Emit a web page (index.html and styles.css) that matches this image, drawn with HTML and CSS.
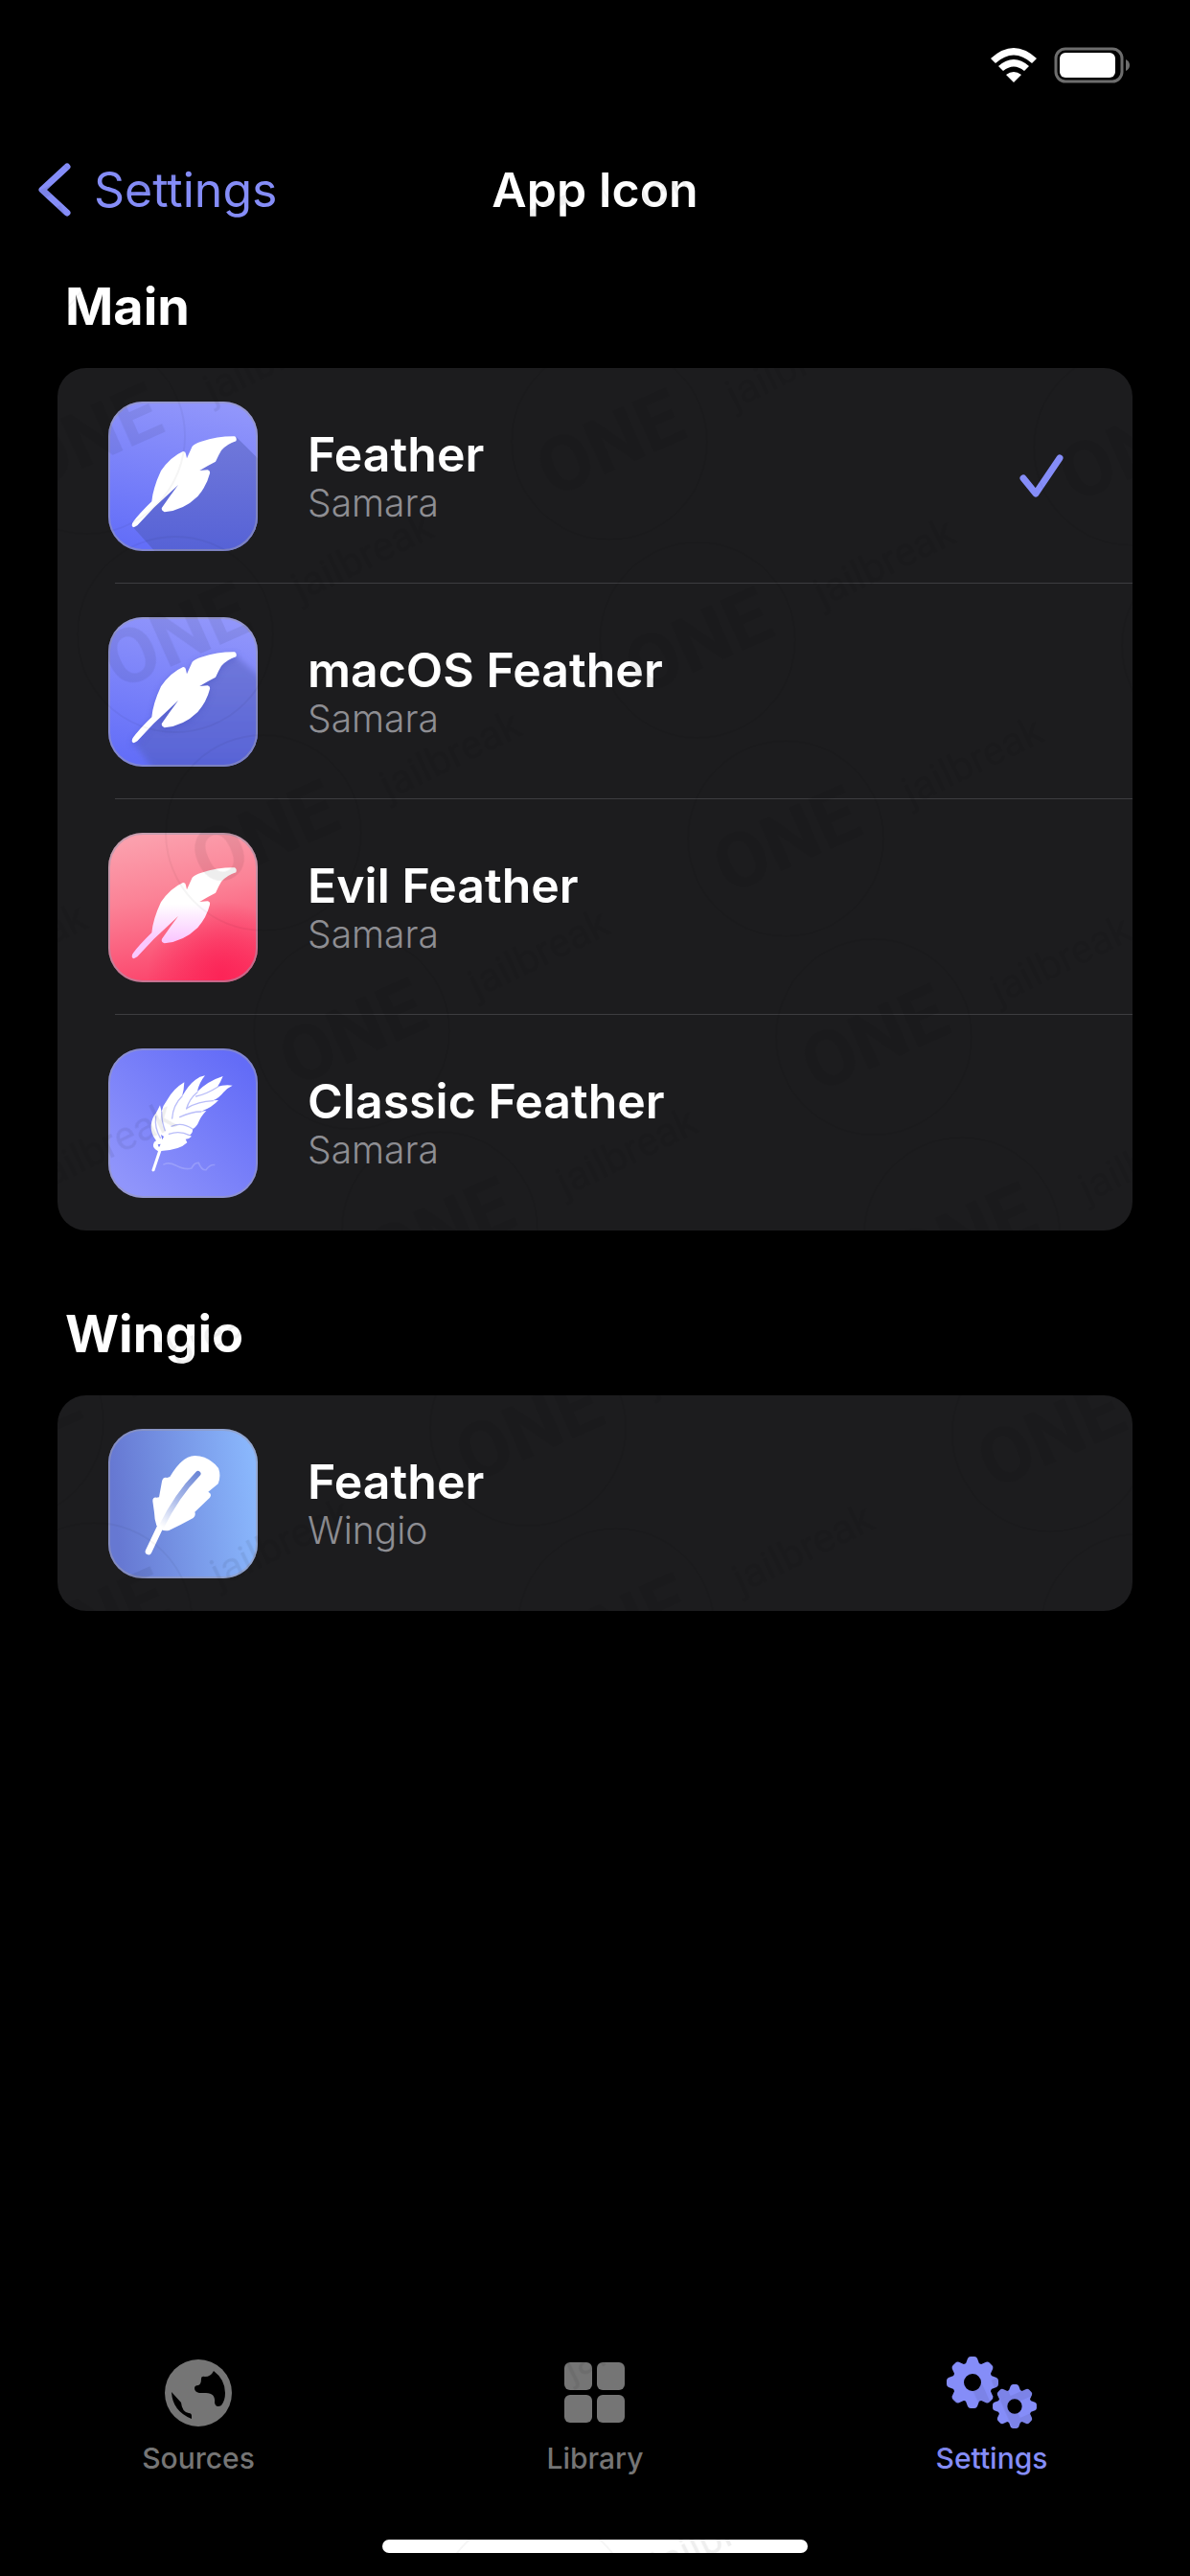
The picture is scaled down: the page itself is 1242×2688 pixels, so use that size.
FILE: index.html
```html
<!DOCTYPE html>
<html lang="en">
<head>
    <meta charset="UTF-8">
    <meta name="viewport" content="width=device-width, initial-scale=1.0">
    <title>App Icon</title>
    <link rel="stylesheet" href="styles.css">
</head>
<body>
    <!-- Shared shapes -->
    <svg class="defs" width="0" height="0" aria-hidden="true">
        <defs>
            <linearGradient id="indigo" x1="0.6" y1="0" x2="0.4" y2="1">
                <stop offset="0" stop-color="#9196fb"/>
                <stop offset="1" stop-color="#636ef8"/>
            </linearGradient>
            <linearGradient id="shade" x1="0" y1="0" x2="0" y2="1">
                <stop offset="0" stop-color="#7078da"/>
                <stop offset="1" stop-color="#5662d6"/>
            </linearGradient>
            <linearGradient id="rose" x1="0.4" y1="0" x2="0.6" y2="1">
                <stop offset="0" stop-color="#fba0ad"/>
                <stop offset="0.4" stop-color="#fb8296"/>
                <stop offset="1" stop-color="#fb3f68"/>
            </linearGradient>
            <radialGradient id="rose-glow" cx="0.76" cy="0.96" r="0.5">
                <stop offset="0" stop-color="#fc2457"/>
                <stop offset="1" stop-color="#fc2457" stop-opacity="0"/>
            </radialGradient>
            <linearGradient id="rose-feather" x1="0" y1="0" x2="0" y2="1">
                <stop offset="0.4" stop-color="#fff"/>
                <stop offset="0.8" stop-color="#fac8ff"/>
            </linearGradient>
            <linearGradient id="classic" x1="1" y1="0" x2="0" y2="1">
                <stop offset="0.1" stop-color="#636cf7"/>
                <stop offset="0.9" stop-color="#9095fb"/>
            </linearGradient>
            <linearGradient id="sky" x1="0" y1="0.1" x2="1" y2="0">
                <stop offset="0" stop-color="#6678d2"/>
                <stop offset="1" stop-color="#8cbbff"/>
            </linearGradient>
            <linearGradient id="quill" gradientUnits="userSpaceOnUse" x1="281" y1="139" x2="166" y2="307">
                <stop offset="0" stop-color="#6d87d6"/>
                <stop offset="0.5" stop-color="#a9b9e9"/>
                <stop offset="1" stop-color="#fff"/>
            </linearGradient>
            <filter id="blur" x="-20%" y="-20%" width="140%" height="140%">
                <feGaussianBlur stdDeviation="9"/>
            </filter>
            <clipPath id="tile">
                <rect width="468" height="468" rx="108"/>
            </clipPath>
            <path id="feather" d="M74 388 Q74 380 79 375 Q98 350 136 313 Q140 270 165 217 Q195 173 234 156 Q242 155 243 164 L246 178 L263 140 Q272 131 291 125 Q345 108 396 109 Q404 114 400 124 Q372 133 354 153 Q345 168 336 188 Q312 200 286 216 L311 214 Q320 216 318 225 Q308 265 280 297 Q235 341 176 346 Q164 341 168 332 Q190 300 219 261 Q180 298 143 332 L91 388 Q76 399 74 388 Z"/>
            <path id="tooth" d="M-8 -17 L-5 -25 Q-4 -27 -2 -27 H2 Q4 -27 5 -25 L8 -17 Z"/>
            <g id="gear">
                <circle r="15" fill="none" stroke="currentColor" stroke-width="12"/>
                <use href="#tooth"/>
                <use href="#tooth" transform="rotate(45)"/>
                <use href="#tooth" transform="rotate(90)"/>
                <use href="#tooth" transform="rotate(135)"/>
                <use href="#tooth" transform="rotate(180)"/>
                <use href="#tooth" transform="rotate(225)"/>
                <use href="#tooth" transform="rotate(270)"/>
                <use href="#tooth" transform="rotate(315)"/>
            </g>
        </defs>
    </svg>

    <div class="status-bar">
        <svg class="wifi" viewBox="0 0 48 36" fill="#fff" role="img" aria-label="Wi-Fi">
            <path d="M0 11 Q24 -11 48 11 L43 16 Q24 -1 5 16 Z"/>
            <path d="M8 19 Q24 5 40 19 L35 24 Q24 15 13 24 Z"/>
            <path d="M16 28 Q24 22 32 28 L24 36 Z"/>
        </svg>
        <svg class="battery" viewBox="0 0 80 38" role="img" aria-label="Battery full">
            <rect x="2" y="2" width="69" height="34" rx="10" fill="none" stroke="#6d6d6d" stroke-width="3"/>
            <rect x="6" y="6" width="58" height="26" rx="6" fill="#fff"/>
            <path d="M75 13 Q79 15 79 19 Q79 23 75 25 Z" fill="#6d6d6d"/>
        </svg>
    </div>

    <header class="nav-bar">
        <a class="back" href="#settings">
            <svg class="chevron" viewBox="0 0 34 56" aria-hidden="true">
                <path d="M30 4 L4 28 L30 52" fill="none" stroke="currentColor" stroke-width="7" stroke-linecap="round" stroke-linejoin="round"/>
            </svg>
            <span>Settings</span>
        </a>
        <h1>App Icon</h1>
    </header>

    <main>
        <section>
            <h2>Main</h2>
            <ul class="card">
                <li>
                    <button class="row" type="button" aria-pressed="true">
                        <svg class="app-icon" viewBox="0 0 468 468" aria-hidden="true">
                            <g clip-path="url(#tile)">
                                <rect width="468" height="468" fill="url(#indigo)"/>
                                <path d="M400 110 L468 178 V468 H145 L78 394 L246 178 Z" fill="url(#shade)"/>
                                <use href="#feather" fill="#fff"/>
                            </g>
                            <rect class="edge" x="3" y="3" width="462" height="462" rx="105"/>
                        </svg>
                        <span class="label">
                            <span class="name">Feather</span>
                            <span class="author">Samara</span>
                        </span>
                        <svg class="check" viewBox="0 0 46 46" aria-hidden="true">
                            <path d="M4 25 L17 41 L42 4" fill="none" stroke="currentColor" stroke-width="7" stroke-linecap="round" stroke-linejoin="round"/>
                        </svg>
                    </button>
                </li>
                <li>
                    <button class="row" type="button" aria-pressed="false">
                        <svg class="app-icon" viewBox="0 0 468 468" aria-hidden="true">
                            <g clip-path="url(#tile)">
                                <rect width="468" height="468" fill="url(#indigo)"/>
                                <path d="M395 118 L490 200 V490 H150 L84 398 L246 190 Z" fill="url(#shade)" filter="url(#blur)"/>
                                <use href="#feather" fill="#4c56c4" opacity="0.5" filter="url(#blur)" y="7"/>
                                <use href="#feather" fill="#fff"/>
                            </g>
                            <rect class="edge" x="3" y="3" width="462" height="462" rx="105"/>
                        </svg>
                        <span class="label">
                            <span class="name">macOS Feather</span>
                            <span class="author">Samara</span>
                        </span>
                    </button>
                </li>
                <li>
                    <button class="row" type="button" aria-pressed="false">
                        <svg class="app-icon" viewBox="0 0 468 468" aria-hidden="true">
                            <g clip-path="url(#tile)">
                                <rect width="468" height="468" fill="url(#rose)"/>
                                <rect width="468" height="468" fill="url(#rose-glow)"/>
                                <use href="#feather" fill="url(#rose-feather)"/>
                            </g>
                            <rect class="edge" x="3" y="3" width="462" height="462" rx="105"/>
                        </svg>
                        <span class="label">
                            <span class="name">Evil Feather</span>
                            <span class="author">Samara</span>
                        </span>
                    </button>
                </li>
                <li>
                    <button class="row" type="button" aria-pressed="false">
                        <svg class="app-icon" viewBox="0 0 468 468" aria-hidden="true">
                            <g clip-path="url(#tile)">
                                <rect width="468" height="468" fill="url(#classic)"/>
                                <path d="M136 382 L156 322 Q138 312 141 301 Q142 292 150 289 Q132 266 134 240 Q137 216 149 203 Q155 193 162 178 L167 198 Q171 178 184 162 Q204 126 238 106 Q237 132 231 150 Q252 113 273 98 Q286 87 303 85 Q284 108 279 135 Q312 102 359 87 Q352 105 342 120 Q362 113 389 116 Q372 124 361 137 Q348 154 328 163 L345 162 Q326 184 291 197 L307 195 Q290 213 284 228 Q278 244 264 253 Q266 264 254 272 L261 275 Q254 283 242 284 L247 295 Q224 318 166 321 L145 383 Q139 388 136 382 Z" fill="#fff"/>
                                <g fill="none" stroke="#b9bdf9" stroke-width="4" stroke-linecap="round">
                                    <path d="M344 120 Q306 144 275 150"/>
                                    <path d="M279 137 Q253 158 245 189"/>
                                    <path d="M231 150 Q203 177 200 219"/>
                                    <path d="M167 198 Q167 230 178 257"/>
                                    <path d="M328 164 Q282 166 246 187"/>
                                    <path d="M291 198 Q259 198 224 215"/>
                                    <path d="M264 252 Q230 229 198 244"/>
                                    <path d="M254 272 Q224 256 190 268"/>
                                    <path d="M149 213 Q144 248 163 280"/>
                                </g>
                                <path d="M165 270 L174 276 L169 286 Z M155 301 L164 299 L159 310 Z" fill="#747cf8"/>
                                <path d="M172 364 Q188 354 211 366 Q238 381 261 375 Q269 357 283 358 Q292 382 306 380 Q320 362 334 365" fill="none" stroke="#fff" stroke-width="5" opacity="0.18"/>
                            </g>
                            <rect class="edge" x="3" y="3" width="462" height="462" rx="105"/>
                        </svg>
                        <span class="label">
                            <span class="name">Classic Feather</span>
                            <span class="author">Samara</span>
                        </span>
                    </button>
                </li>
            </ul>
        </section>

        <section>
            <h2>Wingio</h2>
            <ul class="card">
                <li>
                    <button class="row" type="button" aria-pressed="false">
                        <svg class="app-icon" viewBox="0 0 468 468" aria-hidden="true">
                            <g clip-path="url(#tile)">
                                <rect width="468" height="468" fill="url(#sky)"/>
                                <path d="M126 384 L162 308" stroke="#fff" stroke-width="20" stroke-linecap="round"/>
                                <path d="M151 302 Q144 280 144 262 L139 226 Q139 213 151 215 L159 214 L168 164 Q171 150 184 153 L193 150 Q232 84 271 84 Q315 85 345 123 Q354 147 344 172 L313 197 Q326 204 318 215 L271 260 Q275 272 266 279 Q228 300 190 318 Q167 323 151 302 Z" fill="#fff"/>
                                <path d="M281 140 Q214 208 166 307" fill="none" stroke="url(#quill)" stroke-width="17" stroke-linecap="round"/>
                            </g>
                            <rect class="edge" x="3" y="3" width="462" height="462" rx="105"/>
                        </svg>
                        <span class="label">
                            <span class="name">Feather</span>
                            <span class="author">Wingio</span>
                        </span>
                    </button>
                </li>
            </ul>
        </section>
    </main>

    <nav class="tab-bar">
        <a class="tab" href="#sources">
            <svg width="70" height="78" viewBox="0 -4 70 78" aria-hidden="true">
                <circle cx="35" cy="35" r="35" fill="currentColor"/>
                <path d="M51 12 Q63 21 63 35 Q63 43 59 48 Q53 51 52 45 Q53 35 43 35 H36 Q31 34 31 30 Q31 27 35 27 Q38 26 38 20 Q38 17 42 18 Q48 18 51 12 Z" fill="#000"/>
                <path d="M7 34 L17 45 Q18 55 25 56 Q28 56 28 59 V62 Q8 54 7 34 Z" fill="#000"/>
            </svg>
            <span>Sources</span>
        </a>
        <a class="tab" href="#library">
            <svg width="64" height="78" viewBox="0 -7 64 78" fill="currentColor" aria-hidden="true">
                <rect width="29" height="29" rx="6"/>
                <rect x="34" width="29" height="29" rx="6"/>
                <rect y="34" width="29" height="29" rx="6"/>
                <rect x="34" y="34" width="29" height="29" rx="6"/>
            </svg>
            <span>Library</span>
        </a>
        <a class="tab active" href="#settings" aria-current="page">
            <svg width="94" height="78" viewBox="0 0 94 78" fill="currentColor" aria-hidden="true">
                <use href="#gear" transform="translate(27 28)"/>
                <use href="#gear" transform="translate(71 53) scale(0.85)"/>
            </svg>
            <span>Settings</span>
        </a>
    </nav>
    <div class="home-indicator"></div>

    <!-- Faint stamp repeated over the whole screen -->
    <svg class="stamps" aria-hidden="true">
        <defs>
            <g id="stamp">
                <circle r="102" fill="none" stroke="#000" stroke-width="2" opacity="0.6"/>
                <g transform="rotate(-24)">
                    <text class="stamp-big" y="29" text-anchor="middle">ONE</text>
                </g>
                <g transform="translate(196 -79) rotate(-26)">
                    <text class="stamp-small" y="12" text-anchor="middle">jailbreak</text>
                </g>
            </g>
            <g id="stamp-row">
                <use href="#stamp" x="-1544" y="437"/>
                <use href="#stamp" x="-999" y="443"/>
                <use href="#stamp" x="-454" y="449"/>
                <use href="#stamp" x="91" y="455"/>
                <use href="#stamp" x="636" y="461"/>
                <use href="#stamp" x="1181" y="467"/>
            </g>
        </defs>
        <use href="#stamp-row" x="-92" y="-207"/>
        <use href="#stamp-row"/>
        <use href="#stamp-row" x="92" y="207"/>
        <use href="#stamp-row" x="184" y="414"/>
        <use href="#stamp-row" x="276" y="621"/>
        <use href="#stamp-row" x="368" y="828"/>
        <use href="#stamp-row" x="460" y="1035"/>
        <use href="#stamp-row" x="552" y="1242"/>
        <use href="#stamp-row" x="920" y="2070"/>
        <use href="#stamp-row" x="1012" y="2277"/>
    </svg>
</body>
</html>
```
FILE: styles.css
```css
* {
    box-sizing: border-box;
}

body {
    position: relative;
    display: flex;
    flex-direction: column;
    min-height: 100vh;
    margin: 0;
    background: #000;
    color: #fff;
    font-family: Inter, "Liberation Sans", sans-serif;
}

a {
    color: inherit;
    text-decoration: none;
}

.defs {
    position: absolute;
}

.status-bar {
    display: flex;
    justify-content: flex-end;
    align-items: center;
    gap: 18px;
    height: 136px;
    padding: 0 62px 0 0;
}

.wifi {
    width: 48px;
    height: 36px;
}

.battery {
    width: 80px;
    height: 38px;
}

.nav-bar {
    display: grid;
    grid-template-columns: 1fr auto 1fr;
    align-items: center;
    height: 124px;
    padding: 0 40px;
}

.back {
    display: flex;
    align-items: center;
    gap: 24px;
    color: #858df8;
    font-size: 50px;
}

.chevron {
    width: 34px;
    height: 56px;
}

h1 {
    margin: 0;
    font-size: 50px;
    font-weight: 600;
}

main {
    flex: 1;
    padding: 0 60px;
}

section {
    margin-bottom: 48px;
}

h2 {
    margin: 0;
    padding: 26px 8px 30px;
    font-size: 54px;
    font-weight: 700;
    line-height: 68px;
}

.card {
    margin: 0;
    padding: 0;
    overflow: hidden;
    list-style: none;
    background: #1c1c1e;
    border-radius: 30px;
}

.card li:not(:last-child) {
    background: linear-gradient(#3d3d40, #3d3d40) 60px 100% / 100% 1px no-repeat;
}

.row {
    display: flex;
    align-items: center;
    width: 100%;
    height: 225px;
    padding: 0 72px 0 53px;
    border: none;
    background: none;
    color: inherit;
    font: inherit;
    text-align: left;
    cursor: pointer;
}

.app-icon {
    flex: none;
    width: 156px;
    height: 156px;
}

.edge {
    fill: none;
    stroke: #9b9bb0;
    stroke-opacity: 0.55;
    stroke-width: 6;
}

.label {
    display: flex;
    flex: 1;
    flex-direction: column;
    margin-left: 52px;
}

.name {
    font-size: 50px;
    font-weight: 600;
    line-height: 56px;
}

.author {
    color: #8e8e93;
    font-size: 39px;
    font-weight: 300;
    line-height: 46px;
}

.check {
    width: 46px;
    height: 46px;
    color: #858df8;
}

.tab-bar {
    display: grid;
    grid-template-columns: repeat(3, 1fr);
    margin-bottom: 66px;
}

.tab {
    display: flex;
    flex-direction: column;
    align-items: center;
    gap: 10px;
    color: #757575;
    font-size: 30px;
    font-weight: 500;
    line-height: 38px;
}

.tab.active {
    color: #858df8;
}

.home-indicator {
    width: 444px;
    height: 14px;
    margin: 0 auto 24px;
    border-radius: 7px;
    background: #fff;
}

/* decoration above everything, never catches taps */
.stamps {
    position: absolute;
    inset: 0;
    width: 100%;
    height: 100%;
    opacity: 0.07;
    pointer-events: none;
}

.stamp-big {
    font-family: Roboto, sans-serif;
    font-size: 80px;
    font-weight: bold;
}

.stamp-small {
    font-family: Roboto, sans-serif;
    font-size: 42px;
}
```
